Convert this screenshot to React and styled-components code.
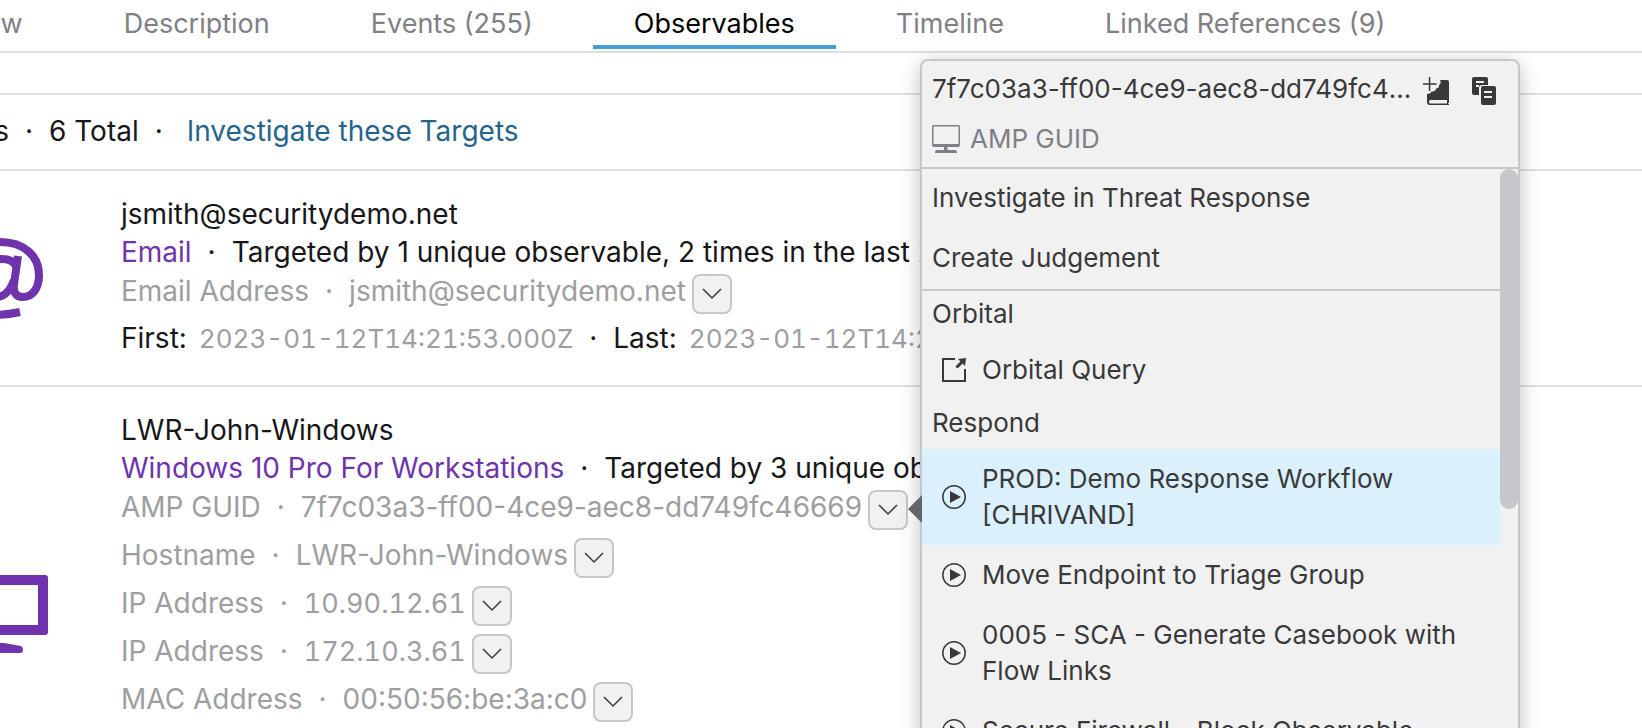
import React from 'react';
import styled, { createGlobalStyle, css } from 'styled-components';

const GlobalStyle = createGlobalStyle`
  *, *::before, *::after { box-sizing: border-box; }
  body {
    margin: 0;
    background: #fff;
    color: #17171a;
    font-family: Inter, "Liberation Sans", sans-serif;
    font-size: 28px;
  }
  button { font: inherit; color: inherit; cursor: pointer; }
  a { text-decoration: none; }
  ul { list-style: none; margin: 0; padding: 0; }
`;

const Viewport = styled.div`
  position: relative;
  height: 100vh;
  overflow: hidden;
`;

/* The page is scrolled sideways under the window's left edge. */
const Page = styled.main`
  margin-left: -140px;
  white-space: nowrap;
`;

const Tabs = styled.nav`
  display: flex;
  gap: 19px;
  padding: 0 0 2px 1px;
  border-bottom: 2px solid #dfdfdf;
  font-size: 27px;
`;

const Tab = styled.button`
  height: 49px;
  padding: 2px 41px 0;
  border: 0;
  border-bottom: 4px solid ${(p) => (p.$active ? '#459fd8' : 'transparent')};
  background: none;
  color: ${(p) => (p.$active ? '#000' : '#7f7f86')};
  line-height: 43px;
`;

const Spacer = styled.div`
  height: 42px;
  border-bottom: 2px solid #dfdfdf;
`;

const Summary = styled.div`
  display: flex;
  padding: 18px 0 20px 50px;
  border-bottom: 2px solid #dfdfdf;
  line-height: 36px;
`;

const Dot = styled.span`
  display: inline-block;
  width: 40px;
  text-align: center;
`;

const InvestigateLink = styled.a`
  margin-left: 8px;
  color: #25658c;
`;

const Target = styled.section`
  display: flex;
  align-items: center;
  gap: 73px;
  min-height: ${(p) => (p.$tall ? '456px' : '0')};
  padding-left: 92px;
  border-bottom: 2px solid #dfdfdf;
`;

const TargetIcon = styled.svg`
  flex: none;
  width: 96px;
  height: 96px;
  color: #6e33ad;
`;

const TargetBody = styled.div`
  align-self: flex-start;
  padding: 24px 0 27px;
`;

const Line = styled.div`
  line-height: 38px;
`;

const Kind = styled.span`
  color: #6e33ad;
`;

const Attributes = styled.ul`
  display: flex;
  flex-direction: column;
  gap: 8px;
  padding: 3px 0 5px;
`;

const Attribute = styled.li`
  display: flex;
  gap: 6px;
  height: 40px;
  color: #9e9ea2;
  line-height: 35px;
`;

const Address = styled.span`
  font-size: 27px;
  font-variant-numeric: tabular-nums;
`;

const Time = styled.time`
  margin-left: 12px;
  color: #9e9ea2;
  font-size: 26px;
  font-variant-numeric: tabular-nums;
`;

const MenuButton = styled.button`
  display: flex;
  align-items: center;
  justify-content: center;
  width: 40px;
  height: 40px;
  padding: 0;
  border: 2px solid #c6c7ca;
  border-radius: 8px;
  background: #f1f1f1;
  color: #39393b;
`;

const Popover = styled.aside`
  position: absolute;
  top: 59px;
  left: 920px;
  width: 600px;
  border: 2px solid #c6c7ca;
  border-radius: 8px;
  background: #f1f1f1;
  box-shadow: 0 4px 20px rgba(0, 0, 0, 0.25);
  color: #39393b;
  font-size: 26px;
  line-height: 36px;

  &::before {
    content: '';
    position: absolute;
    top: 434px;
    right: 100%;
    border: 14px solid transparent;
    border-left-width: 0;
    border-right-color: #636569;
  }
`;

const PopoverHeader = styled.header`
  display: flex;
  flex-direction: column;
  gap: 14px;
  padding: 10px 22px 10px 10px;
  border-bottom: 2px solid #c6c7ca;
`;

const HeaderRow = styled.div`
  display: flex;
  align-items: center;
  gap: 10px;
`;

const PopoverTitle = styled.div`
  flex: 1;
  min-width: 0;
  overflow: hidden;
  text-overflow: ellipsis;
  white-space: nowrap;
`;

const Actions = styled.div`
  display: flex;
  gap: 23px;
`;

const IconButton = styled.button`
  display: flex;
  padding: 4px 0 0;
  border: 0;
  background: none;
`;

const ObservableType = styled.span`
  color: #7f7f86;
`;

const PopoverBody = styled.div`
  display: flex;
  align-items: flex-start;
`;

const Menu = styled.div`
  flex: 1;
`;

const MenuGroup = styled.ul`
  ${(p) =>
    p.$divided &&
    css`
      border-bottom: 2px solid #c6c7ca;
    `}
`;

const MenuHeading = styled.h3`
  margin: 0;
  padding: 5px 10px 8px;
  font-size: 26px;
  font-weight: 400;
`;

const MenuItem = styled.button`
  display: flex;
  align-items: center;
  gap: 16px;
  width: 100%;
  padding: ${(p) => (p.$nested ? '12px 10px 12px 20px' : '11px 10px 13px')};
  border: 0;
  background: ${(p) => (p.$active ? '#daf0fd' : 'none')};
  text-align: left;
`;

const ItemIcon = styled.svg`
  flex: none;
  width: 24px;
  height: 24px;
`;

const Scrollbar = styled.div`
  width: 18px;
  height: 340px;
  border-radius: 9px;
  background: #c6c7ca;
`;

const ChevronIcon = () => (
  <svg width="20" height="12" viewBox="0 0 20 12" fill="none" stroke="currentColor" strokeWidth="1.5" aria-hidden="true">
    <path d="M1 1l9 9 9-9" />
  </svg>
);

const AtIcon = () => (
  <TargetIcon viewBox="0 0 96 96" fill="none" stroke="currentColor" aria-hidden="true">
    <path d="M68 82C28 91 6 76 6 49C6 27 24 12 48 12C72 12 87 26 87 45C87 59 80 67 71 67C63 67 61 61 62 54L66 26" strokeWidth="8" />
    <path d="M64 36C61 30 56 29 50 29C38 29 31 40 31 51C31 61 36 67 44 67C53 67 59 59 62 50" strokeWidth="8" />
  </TargetIcon>
);

const MonitorIcon = () => (
  <TargetIcon viewBox="0 0 96 96" fill="currentColor" aria-hidden="true">
    <path fillRule="evenodd" d="M3 9H93Q96 9 96 12V66Q96 69 93 69H3Q0 69 0 66V12Q0 9 3 9ZM10 19V59H86V19Z" />
    <path d="M48 77Q50 77 52 77L69 80Q71 81 71 84Q71 87 68 87H28Q25 87 25 84Q25 81 27 80L44 77Z" />
  </TargetIcon>
);

const SmallMonitorIcon = () => (
  <svg width="28" height="28" viewBox="0 0 28 28" fill="#7f7f86" aria-hidden="true">
    <path fillRule="evenodd" d="M1.5 0H26.5Q28 0 28 1.5V20Q28 22 26 22H15.5V25H23Q25 25 25 28H3Q3 25 5 25H12V22H2Q0 22 0 20V1.5Q0 0 1.5 0ZM1.5 1.5V19H26.5V1.5Z" />
  </svg>
);

const CasebookIcon = () => (
  <svg width="26" height="28" viewBox="0 0 26 28" fill="currentColor" aria-hidden="true">
    <path d="M5.8 0h1.5v6.3H13.5v1.5H7.3V14H5.8V7.8H0V6.3h5.8z" />
    <path fillRule="evenodd" d="M17 3H24Q26 3 26 5V26H25V27H26V28H7Q4 28 4 25V17C7 17 8 16 8.500 14.5C11 15 13 13.5 13 11.5C15 11.5 16.5 10 16 8C18 7 18 5 17 3ZM7 23Q5 24.8 7 26.5H24V23Z" />
  </svg>
);

const CopyIcon = () => (
  <svg width="24" height="28" viewBox="0 0 24 28" fill="currentColor" aria-hidden="true">
    <path fillRule="evenodd" d="M2 0H14Q16 0 16 2V8H10Q7 8 7 11V18H2Q0 18 0 16V2Q0 0 2 0ZM4 4V6H12V4ZM4 8V10H7V8Z" />
    <path fillRule="evenodd" d="M11 9H22Q24 9 24 11V26Q24 28 22 28H11Q9 28 9 26V11Q9 9 11 9ZM12 14V16H20V14ZM12 19V21H20V19Z" />
  </svg>
);

const ExternalIcon = () => (
  <ItemIcon viewBox="0 0 24 24" fill="none" stroke="currentColor" strokeWidth="2" aria-hidden="true">
    <path d="M13 1H1V23H23V11" />
    <path d="M14.5 9.5L20 4" strokeWidth="3" />
    <path d="M16 1L24 0L23 8z" fill="currentColor" stroke="none" />
  </ItemIcon>
);

const PlayIcon = () => (
  <ItemIcon viewBox="0 0 24 24" aria-hidden="true">
    <circle cx="12" cy="12" r="11.2" fill="none" stroke="currentColor" strokeWidth="1.5" />
    <path d="M8 6l11 6-11 6z" fill="currentColor" />
  </ItemIcon>
);

const tabs = ['Overview', 'Description', 'Events (255)', 'Observables', 'Timeline', 'Linked References (9)'];

const targets = [
  {
    name: 'jsmith@securitydemo.net',
    kind: 'Email',
    note: 'Targeted by 1 unique observable, 2 times in the last 2',
    Icon: AtIcon,
    attributes: [['Email Address', 'jsmith@securitydemo.net']],
    first: '2023-01-12T14:21:53.000Z',
    last: '2023-01-12T14:2',
  },
  {
    name: 'LWR-John-Windows',
    kind: 'Windows 10 Pro For Workstations',
    note: 'Targeted by 3 unique ob',
    Icon: MonitorIcon,
    tall: true,
    attributes: [
      ['AMP GUID', '7f7c03a3-ff00-4ce9-aec8-dd749fc46669'],
      ['Hostname', 'LWR-John-Windows'],
      ['IP Address', '10.90.12.61'],
      ['IP Address', '172.10.3.61'],
      ['MAC Address', '00:50:56:be:3a:c0'],
    ],
  },
];

const workflows = [
  'PROD: Demo Response Workflow [CHRIVAND]',
  'Move Endpoint to Triage Group',
  '0005 - SCA - Generate Casebook with Flow Links',
  'Secure Firewall - Block Observable',
];

function TargetRow({ target }) {
  const { Icon } = target;
  return (
    <Target $tall={target.tall}>
      <Icon />
      <TargetBody>
        <Line>{target.name}</Line>
        <Line>
          <Kind>{target.kind}</Kind>
          <Dot>·</Dot>
          {target.note}
        </Line>
        <Attributes>
          {target.attributes.map(([label, value]) => (
            <Attribute key={value}>
              <span>
                {label}
                <Dot>·</Dot>
                {label === 'IP Address' ? <Address>{value}</Address> : value}
              </span>
              <MenuButton aria-label={`Actions for ${value}`}>
                <ChevronIcon />
              </MenuButton>
            </Attribute>
          ))}
        </Attributes>
        {target.first && (
          <Line>
            First:<Time>{target.first}</Time>
            <Dot>·</Dot>
            Last:<Time>{target.last}</Time>
          </Line>
        )}
      </TargetBody>
    </Target>
  );
}

function ObservablePopover() {
  return (
    <Popover>
      <PopoverHeader>
        <HeaderRow>
          <PopoverTitle>7f7c03a3-ff00-4ce9-aec8-dd749fc46669</PopoverTitle>
          <Actions>
            <IconButton aria-label="Add to casebook">
              <CasebookIcon />
            </IconButton>
            <IconButton aria-label="Copy">
              <CopyIcon />
            </IconButton>
          </Actions>
        </HeaderRow>
        <HeaderRow>
          <SmallMonitorIcon />
          <ObservableType>AMP GUID</ObservableType>
        </HeaderRow>
      </PopoverHeader>
      <PopoverBody>
        <Menu>
          <MenuGroup $divided>
            <li><MenuItem>Investigate in Threat Response</MenuItem></li>
            <li><MenuItem>Create Judgement</MenuItem></li>
          </MenuGroup>
          <MenuHeading>Orbital</MenuHeading>
          <MenuGroup>
            <li>
              <MenuItem $nested>
                <ExternalIcon />
                Orbital Query
              </MenuItem>
            </li>
          </MenuGroup>
          <MenuHeading>Respond</MenuHeading>
          <MenuGroup>
            {workflows.map((name, i) => (
              <li key={name}>
                <MenuItem $nested $active={i === 0}>
                  <PlayIcon />
                  {name}
                </MenuItem>
              </li>
            ))}
          </MenuGroup>
        </Menu>
        <Scrollbar />
      </PopoverBody>
    </Popover>
  );
}

export default function App() {
  return (
    <Viewport>
      <GlobalStyle />
      <Page>
        <Tabs>
          {tabs.map((name) => (
            <Tab key={name} $active={name === 'Observables'}>{name}</Tab>
          ))}
        </Tabs>
        <Spacer />
        <Summary>
          Targets<Dot>·</Dot>6 Total<Dot>·</Dot>
          <InvestigateLink href="#targets">Investigate these Targets</InvestigateLink>
        </Summary>
        {targets.map((target) => (
          <TargetRow key={target.name} target={target} />
        ))}
      </Page>
      <ObservablePopover />
    </Viewport>
  );
}
